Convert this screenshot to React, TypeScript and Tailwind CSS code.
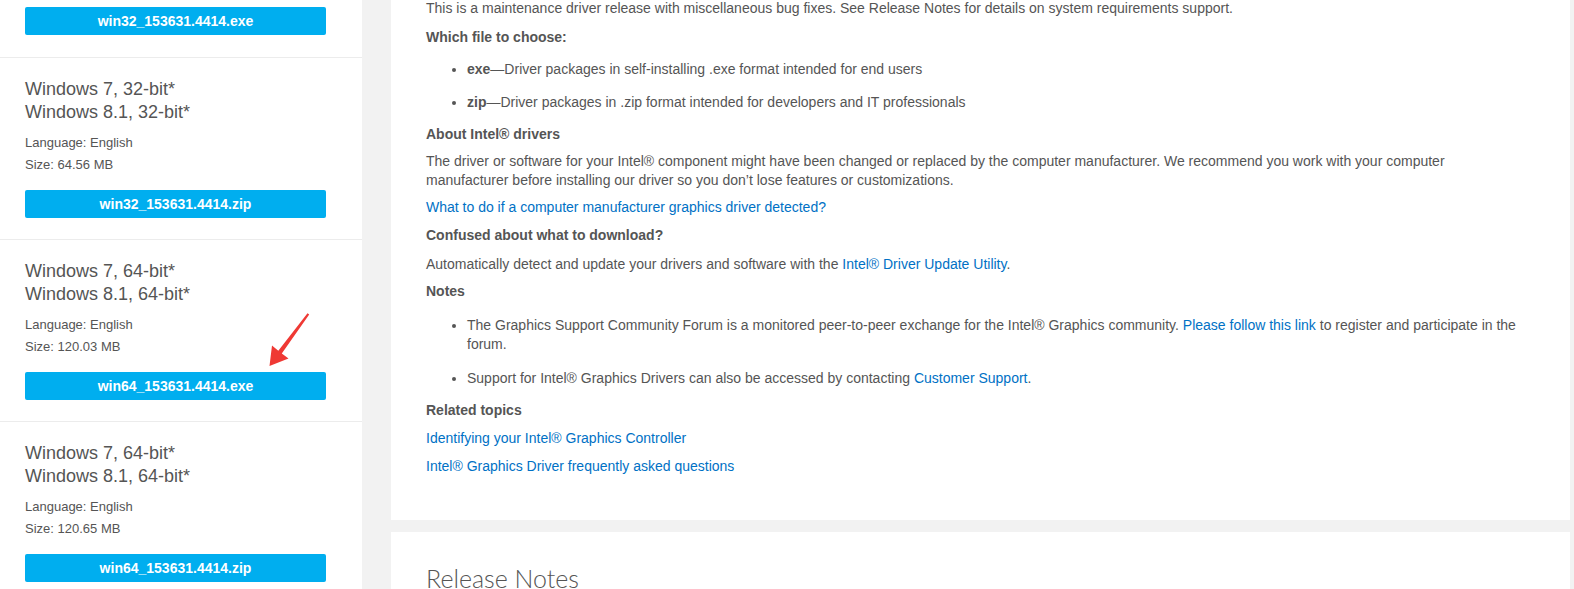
import React from 'react';

const font = { fontFamily: '"Liberation Sans", Arial, sans-serif' };

type Pkg = { title: string[]; size: string; file: string };

const packages: Pkg[] = [
  { title: ['Windows 7, 32-bit*', 'Windows 8.1, 32-bit*'], size: '64.56 MB', file: 'win32_153631.4414.zip' },
  { title: ['Windows 7, 64-bit*', 'Windows 8.1, 64-bit*'], size: '120.03 MB', file: 'win64_153631.4414.exe' },
  { title: ['Windows 7, 64-bit*', 'Windows 8.1, 64-bit*'], size: '120.65 MB', file: 'win64_153631.4414.zip' },
];

function DownloadButton({ file }: { file: string }) {
  return (
    <button className="w-[301px] h-[28px] bg-[#00aeef] rounded-[2px] text-white text-[14px] font-semibold flex items-center justify-center">
      {file}
    </button>
  );
}

function Arrow() {
  // red annotation arrow pointing at the win64 exe button
  return (
    <svg className="absolute left-0 top-0 pointer-events-none" width="362" height="589" viewBox="0 0 362 589">
      <polygon
        points="307.5,313.2 309.2,314.6 281.8,353.4 288.5,358.5 269.5,366 272,345.5 278.3,350.7"
        fill="#ef3934"
      />
    </svg>
  );
}

function Link({ children }: { children: React.ReactNode }) {
  return <a className="text-[#0071c5] cursor-pointer">{children}</a>;
}

export default function App() {
  return (
    <div className="flex w-[1574px] h-[589px] overflow-hidden bg-[#f2f2f2] text-[#555555]" style={font}>
      {/* Sidebar with downloads */}
      <aside className="relative w-[362px] shrink-0 bg-white">
        <div className="pl-[25px] pt-[7px] pb-[22px]">
          <DownloadButton file="win32_153631.4414.exe" />
        </div>
        {packages.map((p, i) => (
          <div key={i} className="border-t border-[#ececec] pl-[25px] pt-[20px] pb-[21px]">
            <div className="text-[18px] leading-[23px] text-[#555]">
              {p.title.map((t) => (
                <div key={t}>{t}</div>
              ))}
            </div>
            <div className="mt-[8px] text-[13px] leading-[22px]">
              <div>Language: English</div>
              <div>Size: {p.size}</div>
            </div>
            <div className="mt-[14px]">
              <DownloadButton file={p.file} />
            </div>
          </div>
        ))}
        <Arrow />
      </aside>

      {/* Main content */}
      <main className="ml-[29px] w-[1179px] shrink-0 flex flex-col">
        <section className="bg-white h-[520px] shrink-0 pl-[35px] pr-[20px] text-[14px] leading-[19px]">
          <div className="-mt-[1px]">
            <p className="mb-[10px] whitespace-nowrap">
              This is a maintenance driver release with miscellaneous bug fixes. See Release Notes for details on system requirements support.
            </p>
            <p className="mb-[9px] font-bold">Which file to choose:</p>
            <ul className="list-disc pl-[41px] pt-[4px] pb-[4px] mb-[9px] space-y-[14px]">
              <li>
                <b>exe</b>—Driver packages in self-installing .exe format intended for end users
              </li>
              <li>
                <b>zip</b>—Driver packages in .zip format intended for developers and IT professionals
              </li>
            </ul>
            <p className="mb-[8px] font-bold">About Intel® drivers</p>
            <p className="mb-[8px] whitespace-nowrap">
              The driver or software for your Intel® component might have been changed or replaced by the computer manufacturer. We recommend you work with your computer
              <br />
              manufacturer before installing our driver so you don’t lose features or customizations.
            </p>
            <p className="mb-[9px]">
              <Link>What to do if a computer manufacturer graphics driver detected?</Link>
            </p>
            <p className="mb-[10px] font-bold">Confused about what to download?</p>
            <p className="mb-[8px]">
              Automatically detect and update your drivers and software with the <Link>Intel® Driver Update Utility</Link>.
            </p>
            <p className="mb-[9px] font-bold">Notes</p>
            <ul className="list-disc pl-[41px] pt-[6px] pb-[4px] mb-[9px] space-y-[15px]">
              <li className="whitespace-nowrap">
                The Graphics Support Community Forum is a monitored peer-to-peer exchange for the Intel® Graphics community. <Link>Please follow this link</Link> to register and participate in the
                <br />
                forum.
              </li>
              <li>
                Support for Intel® Graphics Drivers can also be accessed by contacting <Link>Customer Support</Link>.
              </li>
            </ul>
            <p className="mb-[9px] font-bold">Related topics</p>
            <p className="mb-[9px]">
              <Link>Identifying your Intel® Graphics Controller</Link>
            </p>
            <p className="mb-[9px]">
              <Link>Intel® Graphics Driver frequently asked questions</Link>
            </p>
          </div>
        </section>
        <section className="mt-[12px] bg-white flex-1 pl-[35px] pt-[30px]">
          <h2 className="text-[25px] leading-[32px] font-light text-[#555]" style={{ fontFamily: 'Lato, "Liberation Sans", sans-serif' }}>
            Release Notes
          </h2>
        </section>
      </main>
    </div>
  );
}
